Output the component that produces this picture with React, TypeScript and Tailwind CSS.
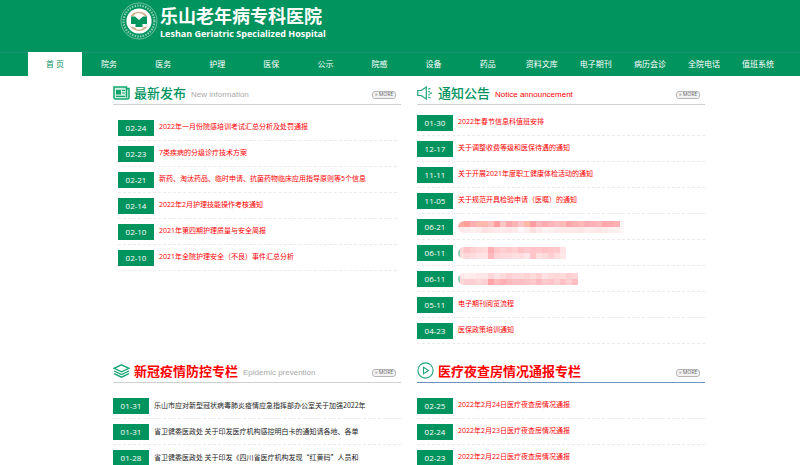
import React from 'react';

const NAV = [
  '首 页', '院务', '医务', '护理', '医保', '公示', '院感',
  '设备', '药品', '资料文库', '电子期刊', '病历会诊', '全院电话', '值班系统',
];

type Mask = { width: number; top: string[]; bottom: string[]; smudge?: boolean };
type Item = { date: string; title?: string; mask?: Mask };

const MASKS: Mask[] = [
  {
    width: 166,
    top: ['#ffa9a5', '#ff9f9b', '#fdaeae', '#ffb9b0', '#fdb9b0', '#ffc0c0', '#ff9c9f', '#ffc4c4', '#ffa9ac', '#fdb4b4', '#ffc4c8', '#ffb9a9', '#fe9ea4', '#ffb6b9', '#ffacb0', '#ffb4b9', '#ffbcc0', '#fdbab7', '#ffa6ab', '#fdb0b4', '#feb9b6', '#fdaeb4', '#ffb2b7', '#fdb7bb', '#ffa7aa', '#ffaaae', '#ffb0b2', '#fff5f5'],
    bottom: ['#ffe8e8', '#ffebeb', '#fff0f0', '#ffebeb', '#ffe1e1', '#ffe6e6', '#ffe9ea', '#ffebeb', '#ffe6e8', '#ffeaea', '#fff7f7', '#ffeeee', '#ffe0e0', '#ffe9e9', '#fff2f2', '#fff0f0', '#ffebeb', '#ffe9e9', '#ffe9e9', '#ffe8e8', '#ffe5e5', '#ffebeb', '#ffe9e9', '#ffe6e6', '#ffeaea', '#ffeeee', '#fff0f0', '#fff7f7'],
  },
  {
    width: 108,
    smudge: true,
    top: ['#ffd4d4', '#fcc4c6', '#ffcfd0', '#ffd6d8', '#ffdadb', '#ffaeb3', '#ffc7ca', '#ffcfd2', '#ffc9cc', '#ffd1d3', '#ffc1c4', '#ffcacd', '#ffc5c9', '#ffc9cb', '#ffc2c5', '#ffc7ca', '#ffc9cb', '#ffe3e4'],
    bottom: ['#ffe0e0', '#ffd7d8', '#ffdcdd', '#ffe2e3', '#ffe3e3', '#ffb8bb', '#ffd4d6', '#ffd9db', '#ffdadc', '#ffe0e1', '#ffdcdd', '#ffe5e7', '#ffc5c8', '#ffe0e1', '#ffdadb', '#ffcfd1', '#ffdcdd', '#ffe7e7'],
  },
  {
    width: 120,
    smudge: true,
    top: ['#ffe5e5', '#ffeeee', '#ffebeb', '#ffe6e6', '#ffe6e6', '#ffd7d9', '#ffe3e4', '#ffdadb', '#ffcfd2', '#ffd7d9', '#ffd9da', '#ffd2d4', '#ffdadb', '#ffd0d2', '#ffe2e3', '#ffdadb', '#ffd7d9', '#ffdadb', '#ffd0d2', '#ffd4d6'],
    bottom: ['#ffd9da', '#ffcfd2', '#ffd0d2', '#ffd7d9', '#ffd0d2', '#ffa5aa', '#ffb8bb', '#ffaeb3', '#ffb8bb', '#ffc0c4', '#ffbfc2', '#ffc4c6', '#ffc9cb', '#ffbcc0', '#ffcacd', '#ffc5c8', '#ffcfd1', '#ffc2c5', '#ffd0d2', '#ffbfc2'],
  },
];

const LATEST: Item[] = [
  { date: '02-24', title: '2022年一月份院感培训考试汇总分析及处罚通报' },
  { date: '02-23', title: '7类疾病的分级诊疗技术方案' },
  { date: '02-21', title: '新药、淘汰药品、临时申请、抗菌药物临床应用指导原则等5个信息' },
  { date: '02-14', title: '2022年2月护理技能操作考核通知' },
  { date: '02-10', title: '2021年第四期护理质量与安全简报' },
  { date: '02-10', title: '2021年全院护理安全（不良）事件汇总分析' },
];

const NOTICES: Item[] = [
  { date: '01-30', title: '2022年春节信息科值班安排' },
  { date: '12-17', title: '关于调整收费等级和医保待遇的通知' },
  { date: '11-11', title: '关于开展2021年度职工健康体检活动的通知' },
  { date: '11-05', title: '关于规范开具检验申请（医嘱）的通知' },
  { date: '06-21', mask: MASKS[0] },
  { date: '06-11', mask: MASKS[1] },
  { date: '06-11', mask: MASKS[2] },
  { date: '05-11', title: '电子期刊阅览流程' },
  { date: '04-23', title: '医保政策培训通知' },
];

const EPIDEMIC: Item[] = [
  { date: '01-31', title: '乐山市应对新型冠状病毒肺炎疫情应急指挥部办公室关于加强2022年' },
  { date: '01-31', title: '省卫健委医政处 关于印发医疗机构感控明白卡的通知请各地、各单' },
  { date: '01-28', title: '省卫健委医政处 关于印发《四川省医疗机构发现“红黄码”人员和' },
];

const NIGHT: Item[] = [
  { date: '02-25', title: '2022年2月24日医疗夜查房情况通报' },
  { date: '02-24', title: '2022年2月23日医疗夜查房情况通报' },
  { date: '02-23', title: '2022年2月22日医疗夜查房情况通报' },
];

function Logo() {
  return (
    <svg viewBox="0 0 38 38" className="size-[38px] shrink-0" fill="none">
      <circle cx="19" cy="19" r="18" stroke="#7cc6a8" strokeWidth=".9" />
      <circle cx="19" cy="19" r="15.400" stroke="#d3ece1" strokeWidth="2.200" strokeDasharray="1.500 1.200" opacity=".65" />
      <circle cx="19" cy="19" r="12.600" fill="#fff" />
      <path d="M10.500 14.500C13 8 25 8 27.500 14.500l-3-.5-2.500-2.500h-6L13.500 14z" fill="#d3b08c" />
      <path d="M10 24.500q9 9 18 0l-4 .5-3 2.500h-4L14 25z" fill="#d3b08c" />
      <path d="M11 14.500h4l4 3.500 4-3.500h4V22h-4.500v3h-7v-3H11z" fill="#02945f" />
      <path d="M17 11.500h4v3.500l-2 1.500-2-1.500z" fill="#fff" />
    </svg>
  );
}

function NewsIcon() {
  return (
    <svg viewBox="0 0 17 14" className="h-3.5 w-[17px]" fill="none">
      <path d="M13.500 2.500H16V11.500a1.500 1.500 0 0 1-1.500 1.500H2.500A1.500 1.500 0 0 1 1 11.500V1h12.500v10.500" fill="#d5f0e4" stroke="#10a56e" strokeWidth="1.500" />
      <path d="M3 3.800h5v4.700H3z" fill="#10a56e" />
      <path d="M9 4.400h3M9 7h3M3 10.300h9" stroke="#10a56e" strokeWidth="1.200" />
    </svg>
  );
}

function HornIcon() {
  return (
    <svg viewBox="0 0 17 14" className="h-3.5 w-[17px]" fill="none" stroke="#1fa677" strokeWidth="1.200">
      <path d="M.8 4.500h3.400L9.300 1v12L4.200 9.500H.8z" />
      <path d="M11.300 3.200l2-1M11.300 5.600h1.500M12.500 7.200H15M11.300 8.800h1.500M11.300 11l2 1" />
    </svg>
  );
}

function LayersIcon() {
  return (
    <svg viewBox="0 0 17 14" className="h-3.5 w-[17px]" fill="none" stroke="#15a470" strokeWidth="1.300">
      <path d="M8.500.8L16 4.300 8.500 7.800 1 4.300z" />
      <path d="M1 7l7.500 3.500L16 7M1 9.700l7.500 3.500L16 9.700" />
    </svg>
  );
}

function PlayIcon() {
  return (
    <svg viewBox="0 0 17 17" className="size-[17px]" fill="none" stroke="#1fa677" strokeWidth="1.100">
      <circle cx="8.500" cy="8.500" r="7.600" />
      <path d="M6.500 5.300l5 3.200-5 3.200z" />
    </svg>
  );
}

function MaskedTitle({ mask }: { mask: Mask }) {
  return (
    <svg viewBox={`0 0 ${mask.width} 12`} className="h-3 rounded-l-full" style={{ width: mask.width }}>
      <g shapeRendering="crispEdges">
        {mask.top.map((c, i) => (
          <rect key={i} x={i * 6} y="0" width="6" height="6" fill={c} />
        ))}
        {mask.bottom.map((c, i) => (
          <rect key={i} x={i * 6} y="6" width="6" height="6" fill={c} />
        ))}
      </g>
      {mask.smudge && <rect x="0" y="3" width="2" height="7" fill="#8fd0b5" />}
    </svg>
  );
}

type SectionProps = {
  icon: React.ReactNode;
  title: string;
  titleClass: string;
  sub?: string;
  subClass?: string;
  lineClass?: string;
  listClass: string;
  linkClass?: string;
  items: Item[];
};

function Section({ icon, title, titleClass, sub, subClass, lineClass = 'border-[#d0d0d0]', listClass, linkClass = 'text-[#ff0000]', items }: SectionProps) {
  return (
    <section className="min-w-0">
      <div className={`flex h-6 items-center border-b pr-[5px] ${lineClass}`}>
        <span className="flex w-[21px] shrink-0 items-center">{icon}</span>
        <h2 className={`text-[13px] leading-5 whitespace-nowrap ${titleClass}`}>{title}</h2>
        {sub && (
          <span className={`ml-[5px] pt-1 font-['Liberation_Sans',sans-serif] text-[8px] whitespace-nowrap ${subClass}`}>{sub}</span>
        )}
        <a href="#" className="mt-1 ml-auto flex h-2 w-6 items-center justify-center rounded-[3px] border border-[#b5b5b5] bg-[#f3f3f3] text-[5px] leading-none whitespace-nowrap text-[#666]">
          » MORE
        </a>
      </div>
      <ul className={listClass}>
        {items.map((item, i) => (
          <li key={i} className="flex h-[26px] items-center gap-[5px] border-b border-dashed border-[#ebebeb]">
            <span className="h-4 w-9 shrink-0 bg-[#02945f] text-center text-[8px] leading-4 text-white">{item.date}</span>
            {item.mask ? (
              <MaskedTitle mask={item.mask} />
            ) : (
              <a href="#" className={`text-[7px] whitespace-nowrap ${linkClass}`}>{item.title}</a>
            )}
          </li>
        ))}
      </ul>
    </section>
  );
}

export default function App() {
  return (
    <div lang="zh-CN" className="h-screen overflow-hidden bg-white font-['Open_Sans','Noto_Sans_CJK_SC',sans-serif]">
      {/* Header */}
      <header className="bg-[#02945f]">
        <div className="flex h-[52px] items-start gap-0.5 pt-0.5 pl-[15%]">
          <Logo />
          <div className="pt-0.5 text-white">
            <h1 className="text-[18px] leading-6 font-bold">乐山老年病专科医院</h1>
            <p className="text-[9px] leading-3 font-bold">Leshan Geriatric Specialized Hospital</p>
          </div>
        </div>
        <nav className="flex h-6 bg-linear-to-b from-[#1a8f77] from-[1px] to-[#02945f] to-[1px] pr-[15px] pl-7">
          {NAV.map((label, i) => (
            <a
              key={label}
              href="#"
              className={`flex flex-1 items-center justify-center text-[8px] whitespace-nowrap ${i === 0 ? 'bg-white text-[#02945f]' : 'text-white'}`}
            >
              {label}
            </a>
          ))}
        </nav>
      </header>

      {/* Sections */}
      <main className="grid grid-cols-2 gap-x-4 gap-y-[15px] pt-[5px] pr-[95px] pl-[113px]">
        <Section
          icon={<NewsIcon />}
          title="最新发布"
          titleClass="font-medium text-[#02945f]"
          sub="New information"
          subClass="text-[#aaa]"
          listClass="pt-[10px] pl-[5px] pr-1"
          items={LATEST}
        />
        <Section
          icon={<HornIcon />}
          title="通知公告"
          titleClass="font-medium text-[#02945f]"
          sub="Notice announcement"
          subClass="text-[#ff0000]"
          listClass="pt-[5px]"
          items={NOTICES}
        />
        <Section
          icon={<LayersIcon />}
          title="新冠疫情防控专栏"
          titleClass="font-bold text-[#ff0000]"
          sub="Epidemic prevention"
          subClass="text-[#aaa]"
          listClass="pt-[10px]"
          linkClass="font-['Noto_Sans_CJK_SC',sans-serif] text-[#222]"
          items={EPIDEMIC}
        />
        <Section
          icon={<PlayIcon />}
          title="医疗夜查房情况通报专栏"
          titleClass="font-bold text-[#ff0000]"
          lineClass="border-[#6f93bb]"
          listClass="pt-[10px]"
          items={NIGHT}
        />
      </main>
    </div>
  );
}
